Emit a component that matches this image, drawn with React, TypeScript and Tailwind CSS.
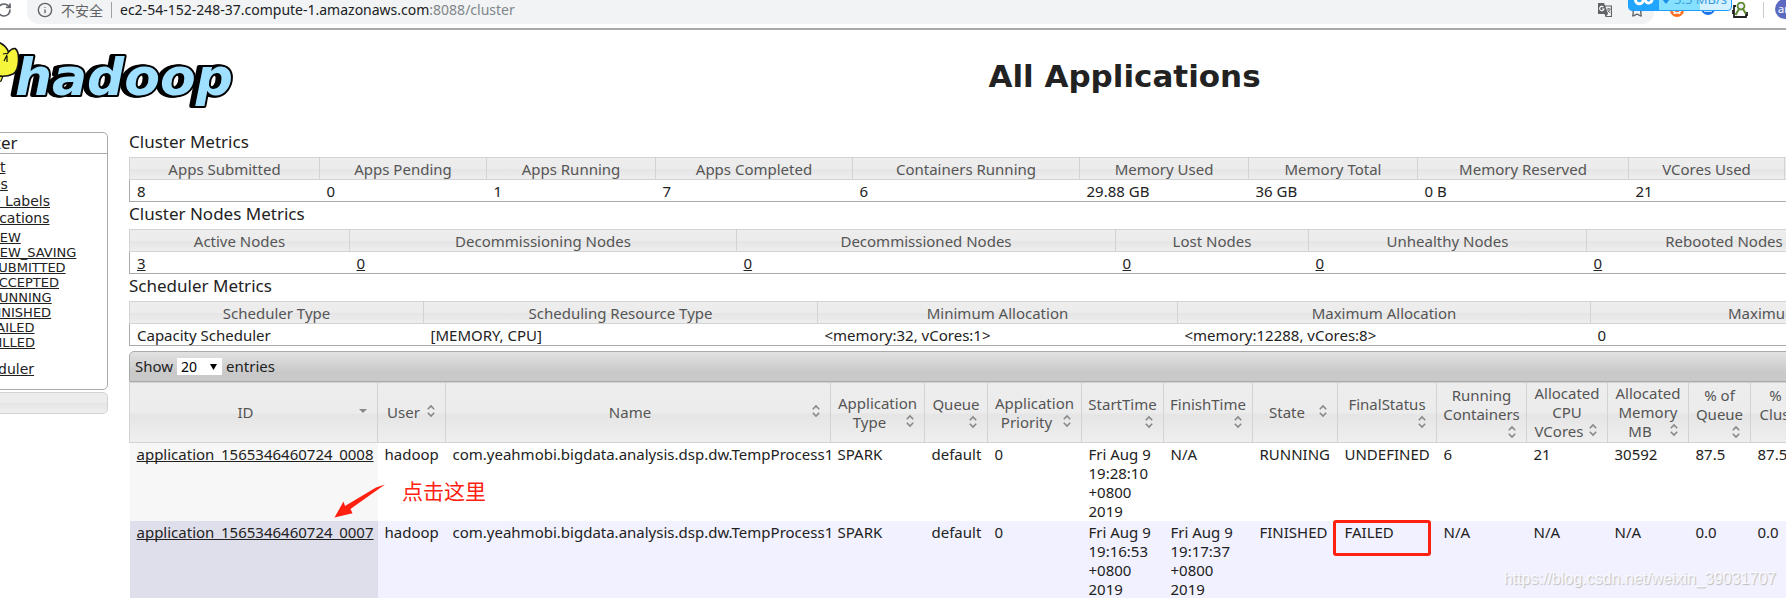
import React from "react";
import { Info, RotateCw, Star } from "lucide-react";

interface Column {
  label: string;
  width?: string;
}

interface MetricsTableProps {
  title: string;
  columns: Column[];
  values: string[];
  linked?: boolean;
}

interface AppRow {
  id: string;
  cells: string[];
}

const HEAD_BG = "bg-[linear-gradient(#ededed_0%,#ececec_50%,#e5e5e5_52%,#efefef_100%)]";

const clusterColumns: Column[] = [
  { label: "Apps Submitted", width: "w-[190px]" },
  { label: "Apps Pending", width: "w-[167px]" },
  { label: "Apps Running", width: "w-[169px]" },
  { label: "Apps Completed", width: "w-[197px]" },
  { label: "Containers Running", width: "w-[227px]" },
  { label: "Memory Used", width: "w-[169px]" },
  { label: "Memory Total", width: "w-[169px]" },
  { label: "Memory Reserved", width: "w-[211px]" },
  { label: "VCores Used", width: "w-[156px]" },
  { label: "" },
];

const nodeColumns: Column[] = [
  { label: "Active Nodes", width: "w-[220px]" },
  { label: "Decommissioning Nodes", width: "w-[387px]" },
  { label: "Decommissioned Nodes", width: "w-[379px]" },
  { label: "Lost Nodes", width: "w-[193px]" },
  { label: "Unhealthy Nodes", width: "w-[278px]" },
  { label: "Rebooted Nodes", width: "w-[275px]" },
  { label: "" },
];

const schedulerColumns: Column[] = [
  { label: "Scheduler Type", width: "w-[294px]" },
  { label: "Scheduling Resource Type", width: "w-[394px]" },
  { label: "Minimum Allocation", width: "w-[360px]" },
  { label: "Maximum Allocation", width: "w-[413px]" },
  { label: "Maximum Cluster Application Priority" },
];

const appColumns: Column[] = [
  { label: "ID", width: "w-[248px]" },
  { label: "User", width: "w-[68px]" },
  { label: "Name", width: "w-[385px]" },
  { label: "Application Type", width: "w-[94px]" },
  { label: "Queue", width: "w-[63px]" },
  { label: "Application Priority", width: "w-[94px]" },
  { label: "StartTime", width: "w-[82px]" },
  { label: "FinishTime", width: "w-[89px]" },
  { label: "State", width: "w-[85px]" },
  { label: "FinalStatus", width: "w-[99px]" },
  { label: "Running Containers", width: "w-[90px]" },
  { label: "Allocated CPU VCores", width: "w-[81px]" },
  { label: "Allocated Memory MB", width: "w-[81px]" },
  { label: "% of Queue", width: "w-[62px]" },
  { label: "% of Cluster", width: "w-[68px]" },
  { label: "" },
];

const apps: AppRow[] = [
  {
    id: "application_1565346460724_0008",
    cells: ["hadoop", "com.yeahmobi.bigdata.analysis.dsp.dw.TempProcess1", "SPARK", "default", "0", "Fri Aug 9 19:28:10 +0800 2019", "N/A", "RUNNING", "UNDEFINED", "6", "21", "30592", "87.5", "87.5", ""],
  },
  {
    id: "application_1565346460724_0007",
    cells: ["hadoop", "com.yeahmobi.bigdata.analysis.dsp.dw.TempProcess1", "SPARK", "default", "0", "Fri Aug 9 19:16:53 +0800 2019", "Fri Aug 9 19:17:37 +0800 2019", "FINISHED", "FAILED", "N/A", "N/A", "N/A", "0.0", "0.0", ""],
  },
];

const navLinks = ["About", "Nodes", "Node Labels", "Applications"];
const appStates = ["NEW", "NEW_SAVING", "SUBMITTED", "ACCEPTED", "RUNNING", "FINISHED", "FAILED", "KILLED"];

function SortIcon({ sorted }: { sorted?: boolean }) {
  return (
    <svg viewBox="0 0 16 16" className="float-right w-4 h-4" aria-hidden="true">
      {sorted ? (
        <path d="M4 6h8l-4 4z" fill="#888" />
      ) : (
        <path d="M4.8 6.2 8 3l3.2 3.2M4.8 9.8 8 13l3.2-3.2" fill="none" stroke="#888" strokeWidth="1.6" />
      )}
    </svg>
  );
}

function BrowserBar() {
  return (
    <div className="relative flex items-start h-[30px] border-b-2 border-[#a9a9a9] overflow-hidden">
      <button aria-label="Reload" className="-ml-1 mt-[2px] w-4 h-4 text-[#5f6368]">
        <RotateCw className="w-4 h-4" strokeWidth={2.5} />
      </button>
      <div className="flex flex-1 items-center h-6 ml-[15px] pl-[10px] pr-[9px] pb-1 rounded-b-xl bg-[#f1f3f4] text-sm leading-5">
        <Info className="w-4 h-4 text-[#5f6368]" />
        <span className="ml-2 text-[#5f6368] font-['Noto_Sans_CJK_SC',sans-serif]">不安全</span>
        <span className="w-px h-4 mx-2 bg-[#9aa0a6]" />
        <span className="text-[#202124]">
          ec2-54-152-248-37.compute-1.amazonaws.com<span className="text-[#80868b]">:8088/cluster</span>
        </span>
        <svg viewBox="0 0 16 16" className="w-4 h-4 ml-auto" aria-hidden="true">
          <path d="M1 1h6l1 2.5H15V15H8.5L7.5 12H1z" fill="#5f6368" />
          <path d="M8.5 4.6h5.4v9.3H9.3L11 12z" fill="#f1f3f4" />
          <path d="M6.4 5A2.2 2.2 0 1 0 7 7H5" fill="none" stroke="#fff" strokeWidth="1.1" />
          <path d="M9.8 7h3.8M11.6 6v1M13 7c-.4 1.5-1.2 2.5-2.4 3.3M10.5 8l2.7 3" fill="none" stroke="#5f6368" strokeWidth=".9" />
        </svg>
        <Star className="w-4 h-4 ml-4 text-[#5f6368]" />
      </div>
      <div className="flex items-start gap-[15px] pl-4 pt-[2px]">
        <svg viewBox="0 0 16 16" className="w-4 h-4" aria-hidden="true">
          <circle cx="7" cy="8" r="7" fill="#ff6d1f" />
          <path d="M3 9q4 4 8 0M4 12l1-2m5 2-1-2" fill="none" stroke="#fff" strokeWidth="1.5" />
        </svg>
        <svg viewBox="0 0 16 16" className="w-4 h-4" aria-hidden="true">
          <circle cx="7" cy="6" r="7" fill="#1a73e8" />
          <path d="M3 9h8" stroke="#fff" strokeWidth="1.5" />
        </svg>
        <svg viewBox="0 0 16 16" className="w-4 h-4" aria-hidden="true">
          <path d="M4 4H2v5H1v2h1v4h12v-2h1v-2h-1" fill="none" stroke="#222" strokeWidth="1.8" />
          <circle cx="9" cy="4" r="3.5" fill="#eef" stroke="#5c8a2c" strokeWidth="1.8" />
          <path d="M7 7 3.5 13M11 7l3 5" stroke="#5c8a2c" strokeWidth="2" />
        </svg>
        <span className="w-px h-4 bg-[#c8cacd]" />
        <span className="-ml-1 -mt-[3px] -mr-[9px] w-5 h-5 pl-[3px] rounded-full bg-[#5c6bc0] text-white text-[11px] leading-5">an</span>
      </div>
      <div className="absolute right-[54px] -top-3 flex h-[23px] w-[104px] overflow-hidden rounded-[4px] border border-[#1e9fff] bg-[linear-gradient(90deg,#86e0ff_70%,#d4f1ff_70%)]">
        <svg viewBox="0 0 30 22" className="shrink-0 w-[30px] h-[22px] bg-[#22a5ff]" aria-hidden="true">
          <path d="M6.5 9v2a3.8 3.8 0 0 0 7.6 0M10 8q5 0 6.5 4 1 2 3 2a3.5 3.5 0 0 0 3.5-3.5V7" fill="none" stroke="#fff" strokeWidth="3" />
        </svg>
        <span className="flex items-center h-5 gap-1 pl-[3px] text-[13px] leading-5 text-[#3a9fe0] whitespace-nowrap">
          <svg viewBox="0 0 8 12" className="w-2 h-3" aria-hidden="true">
            <path d="M2.5 0h3v6H8l-4 5-4-5h2.500z" fill="#1a8fe8" />
          </svg>
          5.5 MB/s
        </span>
      </div>
    </div>
  );
}

function HadoopLogo() {
  return (
    <svg viewBox="0 0 240 90" className="w-60 h-[90px] shrink-0" role="img" aria-label="hadoop">
      <text
        x="15"
        y="65"
        fill="#9fdfff"
        stroke="#000"
        strokeWidth="4"
        strokeLinejoin="round"
        paintOrder="stroke"
        className="font-['DejaVu_Sans',sans-serif] text-[52px] font-bold italic [filter:drop-shadow(-2px_0_0_#000)_drop-shadow(-2px_0_0_#000)]"
      >
        hadoop
      </text>
      <path d="M-2 44 3 46 1 51-2 52z" fill="#f5f53c" stroke="#111" strokeWidth="1.2" />
      <path d="M-2 12Q6 15 8.5 22 12 18 15 18.5 19 21 18.5 31 18 41 13 44 7 47-2 46z" fill="#f5f53c" stroke="#111" strokeWidth="1.6" />
      <path d="M8.5 22 7 24M3 24q3-1 5 0M4 31l3-6M7 32V26" fill="none" stroke="#111" strokeWidth="1.2" />
    </svg>
  );
}

function Sidebar() {
  return (
    <nav className="shrink-0 w-[154px] pt-[2px] font-['DejaVu_Sans',sans-serif] text-[#222]">
      <div className="border border-[#aaa] rounded-[5px]">
        <h3 className="pl-[6px] font-['Noto_Sans',sans-serif] text-[17px] leading-5 h-[21px] border-b border-[#aaa]">Cluster</h3>
        <ul className="pt-[5px] pl-[9px] text-sm leading-[17px]">
          {navLinks.map((label) => (
            <li key={label}>
              <a href="#" className="underline">{label}</a>
            </li>
          ))}
        </ul>
        <ul className="pt-[3px] pl-[35px] text-[13px] leading-[15px]">
          {appStates.map((state) => (
            <li key={state}>
              <a href="#" className="underline">{state}</a>
            </li>
          ))}
        </ul>
        <p className="pl-[9px] pt-[11px] pb-[11px] text-sm leading-[17px]">
          <a href="#" className="underline">Scheduler</a>
        </p>
      </div>
      <h3 className={`mt-[2px] h-[22px] pl-[5px] text-[15px] leading-5 border border-[#d3d3d3] rounded-[5px] ${HEAD_BG}`}>Tools</h3>
    </nav>
  );
}

function MetricsTable({ title, columns, values, linked }: MetricsTableProps) {
  return (
    <section>
      <h2 className="h-[27px] text-[17px] leading-6">{title}</h2>
      <table className="w-full table-fixed border-collapse border border-[#aaa]">
        <thead>
          <tr className={`h-[22px] ${HEAD_BG}`}>
            {columns.map((col, idx) => (
              <th key={idx} className={`${col.width ?? ""} border border-[#d3d3d3] font-normal leading-5 text-[#555]`}>
                {col.label}
              </th>
            ))}
          </tr>
        </thead>
        <tbody>
          <tr className="h-[22px]">
            {columns.map((_, idx) => (
              <td key={idx} className="px-[7px] leading-5">
                {linked && values[idx] ? <a href="#" className="underline">{values[idx]}</a> : values[idx]}
              </td>
            ))}
          </tr>
        </tbody>
      </table>
    </section>
  );
}

function AppsTable() {
  return (
    <section className="mt-[5px]">
      <div className="flex items-center h-[31px] pl-[5px] border border-[#aaa] rounded-t-[5px] bg-[linear-gradient(#e2e2e2,#c9c9c9_70%)]">
        <label className="flex items-center gap-1">
          Show
          <span className="grid items-center">
            <select className="col-start-1 row-start-1 appearance-none w-[45px] h-[17px] pl-1 bg-white text-sm leading-[17px] text-black">
              <option>20</option>
              <option>40</option>
              <option>60</option>
            </select>
            <svg viewBox="0 0 7 6" className="col-start-1 row-start-1 justify-self-end w-[7px] h-[6px] mr-[5px] pointer-events-none" aria-hidden="true">
              <path d="M0 0h7L3.5 6z" fill="#000" />
            </svg>
          </span>
          entries
        </label>
      </div>
      <table className="w-full table-fixed border-collapse">
        <thead>
          <tr className={`h-[60px] ${HEAD_BG}`}>
            {appColumns.map((col, idx) => (
              <th key={idx} className={`${col.width ?? ""} px-[6px] border border-[#d3d3d3] font-normal leading-[19px] text-[#555]`}>
                {col.label}
                {col.label && <SortIcon sorted={idx === 0} />}
              </th>
            ))}
          </tr>
        </thead>
        <tbody>
          {apps.map((app) => (
            <tr key={app.id} className="group h-[78px] align-top even:bg-[#f1f1ff]">
              <td className="px-[7px] pt-[2px] leading-[19px] bg-[#f7f7f7] group-even:bg-[#dfdfeb]">
                <a href="#" className="underline">{app.id}</a>
              </td>
              {app.cells.map((cell, idx) => (
                <td key={idx} className="px-[7px] pt-[2px] leading-[19px]">{cell}</td>
              ))}
            </tr>
          ))}
        </tbody>
      </table>
    </section>
  );
}

export default function App() {
  return (
    <div className="relative overflow-hidden bg-white font-['Noto_Sans',sans-serif] text-[15px] text-[#222] [text-decoration-skip-ink:none]">
      <BrowserBar />
      <header className="flex items-start">
        <HadoopLogo />
        <h1 className="-ml-[120px] min-w-[2009px] flex-1 pt-[26px] text-center font-['DejaVu_Sans',sans-serif] text-[31px] leading-10 font-bold text-[#222]">
          All Applications
        </h1>
      </header>
      <div className="-ml-[46px] mt-[10px] flex items-start gap-[21px]">
        <Sidebar />
        <main className="min-w-[2000px] flex-1">
          <MetricsTable title="Cluster Metrics" columns={clusterColumns} values={["8", "0", "1", "7", "6", "29.88 GB", "36 GB", "0 B", "21"]} />
          <MetricsTable title="Cluster Nodes Metrics" columns={nodeColumns} values={["3", "0", "0", "0", "0", "0"]} linked />
          <MetricsTable
            title="Scheduler Metrics"
            columns={schedulerColumns}
            values={["Capacity Scheduler", "[MEMORY, CPU]", "<memory:32, vCores:1>", "<memory:12288, vCores:8>", "0"]}
          />
          <AppsTable />
        </main>
      </div>

      {/* Annotations drawn over the page */}
      <svg viewBox="0 0 52 36" className="absolute left-[334px] top-[484px] w-[52px] h-9" aria-hidden="true">
        <path d="M51 .5 22 21l-5.5 4 2 4.3-18 4.2L9.5 17.5l1.5 4.5L42 3.5z" fill="#ff2010" />
      </svg>
      <p className="absolute left-[402px] top-[475px] text-[21px] leading-[30px] text-[#ff2010] font-['Noto_Sans_CJK_SC',sans-serif]">点击这里</p>
      <div className="absolute left-[1333px] top-[520px] w-[98px] h-9 rounded-[3px] border-[3px] border-[#ff2010]" />
      <p className="absolute right-[10px] top-[567px] text-base leading-6 text-white/80 [text-shadow:1px_1px_1px_#bbb] font-['Liberation_Sans',sans-serif]">
        https://blog.csdn.net/weixin_39031707
      </p>
    </div>
  );
}
